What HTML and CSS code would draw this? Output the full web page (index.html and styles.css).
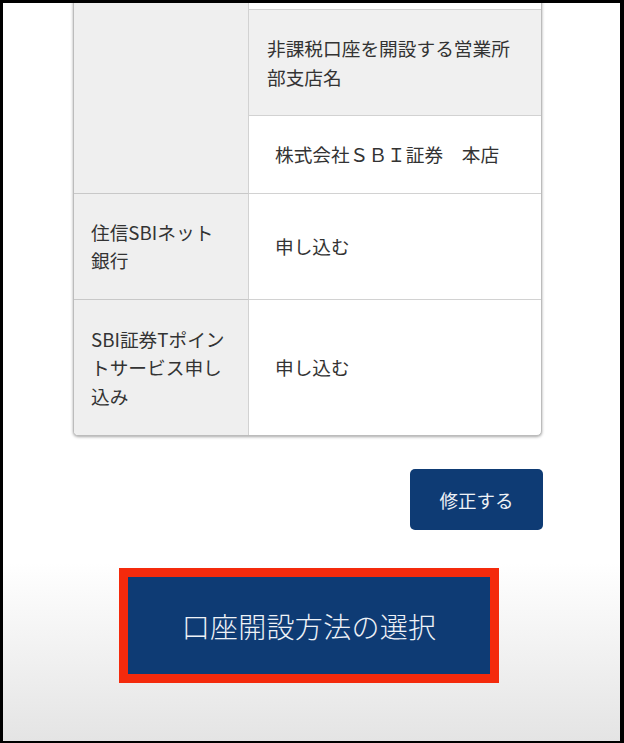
FILE: index.html
```html
<!DOCTYPE html>
<html lang="ja">
<head>
  <meta charset="UTF-8">
  <title>口座開設 入力内容の確認</title>
  <link rel="stylesheet" href="styles.css">
</head>
<body>

  <div class="screen">
    <table class="confirm">
      <colgroup>
        <col class="col-label">
        <col class="col-value">
      </colgroup>
      <tr>
        <th class="label" rowspan="3"></th>
        <td class="value spacer"></td>
      </tr>
      <tr>
        <td class="sub">非課税口座を開設する営業所部支店名</td>
      </tr>
      <tr>
        <td class="value">株式会社ＳＢＩ証券　本店</td>
      </tr>
      <tr>
        <th class="label">住信SBIネット銀行</th>
        <td class="value">申し込む</td>
      </tr>
      <tr>
        <th class="label">SBI証券Tポイントサービス申し込み</th>
        <td class="value">申し込む</td>
      </tr>
    </table>

    <div class="actions">
      <button class="btn-edit">修正する</button>
    </div>

    <div class="highlight">
      <button class="btn-next">口座開設方法の選択</button>
    </div>
  </div>

</body>
</html>
```

FILE: styles.css
```css
body {
  margin: 0;
  padding: 3px 4px 2px 3px;
  background-color: #000;
  font-family: 'Noto Sans CJK JP', 'Noto Sans', sans-serif;
  color: #333;
}

.screen {
  height: 738px;
  overflow: hidden;
  background: linear-gradient(to bottom, #fff 0, #fff 560px, #e4e4e4 738px);
}

.confirm {
  width: 469px;
  margin: -27px 0 0 70px;
  table-layout: fixed;
  border-spacing: 0;
  border: 1px solid #bcbcbc;
  border-radius: 0 0 5px 5px;
  box-shadow: 0 1px 3px rgba(0, 0, 0, 0.35);
  background-color: #fff;
  font-size: 18.7px;
  line-height: 28.5px;
}

.col-label {
  width: 175px;
}

.confirm th,
.confirm td {
  padding: 24px 20px 24px 17px;
  text-align: left;
  font-weight: normal;
  vertical-align: middle;
  border-bottom: 1px solid #d2d2d2;
}

.confirm tr:last-child th,
.confirm tr:last-child td {
  padding-top: 25px;
  padding-bottom: 25px;
  border-bottom: none;
}

.confirm th {
  background-color: #efefef;
  border-right: 1px solid #d2d2d2;
  border-bottom-color: #c8c8c8;
}

.confirm tr:last-child th {
  border-bottom-left-radius: 4px;
}

.confirm .sub {
  background-color: #f0f0f0;
  padding-left: 18px;
}

.confirm .value {
  padding-left: 26px;
}

.confirm .spacer {
  height: 0;
  padding: 0 0 32px;
}

.actions {
  width: 470px;
  margin: 33px 0 0 70px;
  display: flex;
  justify-content: flex-end;
}

button {
  font-family: inherit;
  border: none;
  background-color: #0e3b74;
  color: #eef2f7;
  cursor: pointer;
}

.btn-edit {
  width: 133px;
  height: 61px;
  border-radius: 5px;
  font-size: 18.5px;
}

.highlight {
  width: 362px;
  margin: 38px 0 0 116px;
  border: 9px solid #f42a0c;
}

.btn-next {
  display: block;
  width: 100%;
  height: 97px;
  font-size: 28px;
  font-weight: 300;
  letter-spacing: 0.3px;
}
```
